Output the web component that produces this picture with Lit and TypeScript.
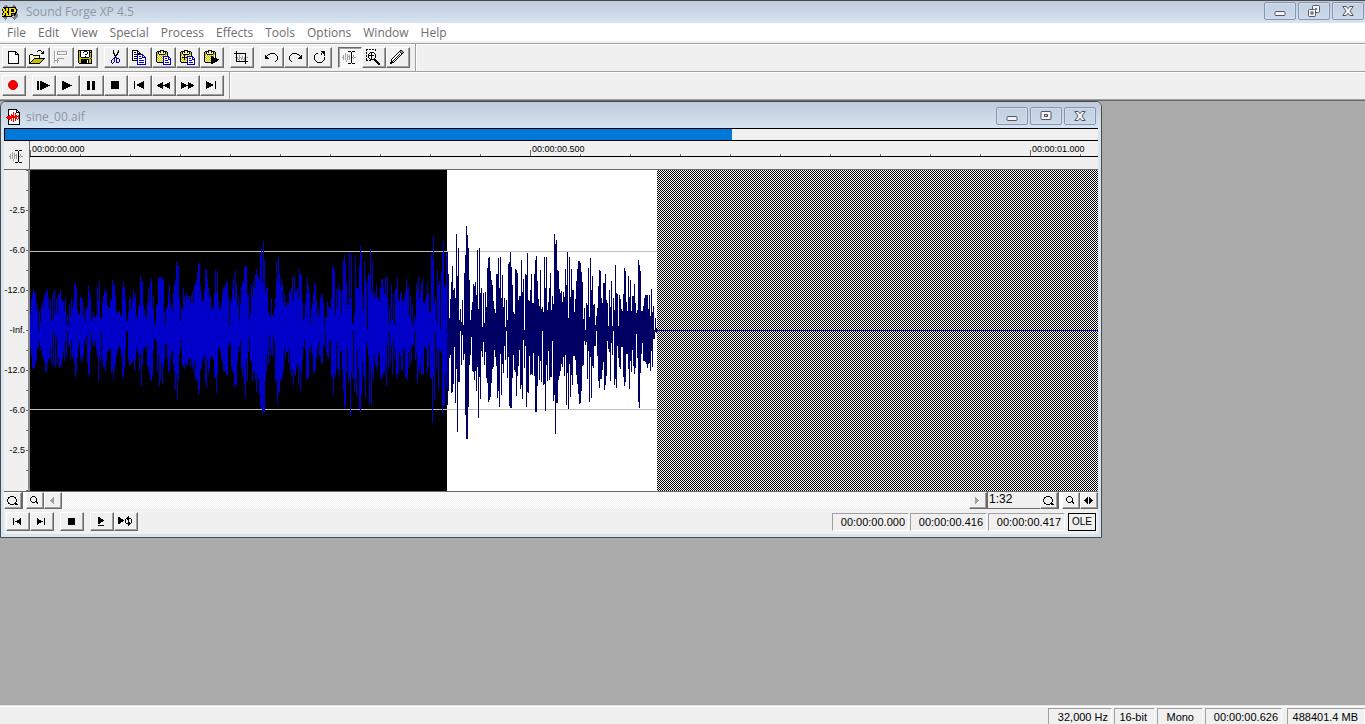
import { LitElement, html, css, svg } from "lit";
import { customElement, property } from "lit/decorators.js";

/* ---- waveform peaks: "above,below" the zero line, one pair per column ---- */
const PEAKS = `
17,16 32,25 35,38 41,37 37,37 37,31 20,30 27,17 0,17 18,10 8,20 25,15 23,27 30,24 33,30 37,41 41,41 39,33 32,28 21,28
31,16 9,32 36,0 10,35 40,4 17,36 32,7 17,33 36,27 36,37 40,36 31,35 28,28 30,21 18,30 32,10 5,26 15,0 4,15 25,14
14,28 31,9 22,28 30,23 46,32 46,46 42,41 20,27 14,18 17,11 33,26 33,32 31,28 14,24 21,9 9,14 20,5 24,31 45,43 38,45
33,21 9,1 13,11 18,15 13,14 13,9 15,19 43,26 29,50 48,26 12,31 11,2 27,29 34,36 41,36 37,41 39,30 25,21 22,19 22,19
31,18 29,42 50,38 45,48 46,39 34,34 18,25 17,20 19,18 18,15 15,18 14,26 42,44 48,48 43,36 30,19 11,1 9,0 18,28 30,34
33,34 20,32 29,32 40,28 33,40 37,29 16,20 11,17 24,23 25,39 54,23 49,55 49,34 25,19 21,14 13,19 12,15 27,35 43,35 29,43
48,50 52,49 21,44 34,19 9,8 4,8 26,11 25,40 53,23 52,55 52,50 53,31 51,53 51,36 19,28 5,13 23,13 23,28 35,41 46,40
22,28 28,21 19,20 38,34 45,41 50,59 69,44 64,68 64,50 32,23 9,19 23,9 20,34 42,36 34,38 27,32 37,34 35,34 30,28 34,28
27,36 34,28 39,35 27,40 46,29 45,48 50,49 58,50 66,64 67,59 43,39 34,36 29,30 29,28 40,25 61,52 61,57 51,28 42,43 33,38
35,28 19,25 24,25 22,29 36,47 60,47 37,62 59,43 29,18 21,16 21,20 27,28 35,30 43,40 45,41 42,39 49,44 47,44 33,15 4,12
30,14 28,36 41,40 52,43 32,56 60,54 46,54 25,30 33,21 12,16 26,10 43,39 49,47 48,36 64,53 64,67 64,28 36,50 35,21 11,6
17,29 46,31 34,50 49,40 42,40 56,49 61,61 56,44 53,48 50,63 75,75 81,78 48,83 89,81 70,81 38,50 42,40 43,23 18,33 15,5
13,25 32,18 16,25 13,4 21,12 32,51 69,49 49,73 73,63 56,61 44,50 52,48 46,46 28,39 36,18 24,28 24,21 28,21 26,32 39,19
37,39 42,45 53,39 29,54 54,42 39,45 39,36 42,33 31,52 61,36 55,60 56,41 28,29 10,16 13,9 28,19 37,48 53,48 45,47 37,17
6,22 21,14 26,24 36,41 47,43 45,39 30,28 15,18 23,11 13,25 32,25 36,33 35,32 27,14 3,17 14,0 12,21 29,26 23,28 23,10
22,10 32,45 64,47 62,64 59,42 15,46 41,12 23,38 46,38 40,46 40,20 17,20 40,38 70,60 75,77 66,75 46,42 25,18 25,52 78,47
32,85 76,41 8,48 5,0 17,61 75,48 42,65 42,19 42,38 64,78 84,81 75,64 35,30 20,46 69,46 51,67 48,12 1,18 57,25 54,73
81,36 38,75 68,42 34,50 39,24 32,34 44,35 32,39 33,21 29,26 42,45 51,49 51,46 42,42 35,43 52,35 33,55 54,14 5,38 24,0
9,33 46,15 10,44 36,7 5,28 40,18 41,48 52,43 30,43 29,21 35,25 39,39 30,39 27,18 32,19 39,46 51,46 41,49 43,21 14,36
34,17 9,32 25,13 2,15 14,0 9,29 47,23 39,52 54,38 32,42 38,32 46,43 51,43 28,44 25,16 30,18 35,18 48,43 36,36 18,13
18,47 77,48 71,92 94,45 25,69 32,0 7,39 60,18 45,59 49,19 1,20 58,22 78,83 89,74 44,74 43,42 77,56 78,74 56,60 12,27
31,24 48,62 64,61 40,53 42,16 32,72 96,38 54,101 82,51 10,51 21,0 8,34 30,4 5,29 57,23 75,84 104,108 95,108 82,76 50,34
10,24 20,6 28,40 46,41 44,49 48,40 35,60 80,36 21,87 82,46 37,68 42,20 3,26 37,11 7,34 38,21 23,47 62,52 72,71 73,69
59,66 50,52 45,38 29,36 21,19 17,26 56,35 56,67 72,60 42,76 73,23 32,64 55,33 23,42 32,15 3,29 30,0 10,47 66,26 68,75
78,77 63,77 45,47 18,24 16,39 61,41 60,65 57,45 30,35 34,19 34,58 70,54 38,68 51,9 0,37 56,15 55,76 77,61 30,62 29,25
40,44 56,43 27,44 27,22 56,45 70,81 74,81 49,55 31,25 24,49 60,30 21,51 23,0 18,54 73,53 42,80 73,34 20,50 28,20 42,49
57,46 20,46 34,10 26,70 96,64 86,103 90,72 60,72 59,49 41,45 37,40 39,33 28,36 38,26 33,45 61,24 45,74 78,42 12,78 73,33
33,66 61,44 40,54 40,25 18,25 31,29 49,44 61,53 69,63 69,73 67,72 58,60 48,35 11,34 22,10 0,14 27,11 25,48 62,20 13,71
72,26 40,67 54,35 25,37 26,15 5,15 14,0 22,25 44,50 60,57 59,48 32,48 27,39 47,31 47,59 56,54 30,45 27,10 4,18 40,21
23,50 49,12 4,24 32,0 20,54 65,48 37,57 36,15 4,27 35,36 31,38 21,16 19,16 36,46 62,55 59,51 28,23 19,23 54,38 33,58
50,30 19,41 34,19 34,35 46,43 27,37 17,3 20,27 70,71 65,77 59,42 19,23 19,12 24,30 32,30 35,31 35,33 35,37 21,33 35,32
14,40 41,20 18,36 24,8 0,8 12,1 2,2`
  .trim()
  .split(/\s+/)
  .map((pair) => pair.split(",").map(Number));

const SELECTED = 417;
const ZERO = 160;

const bars = (from: number, to: number) =>
  PEAKS.slice(from, to)
    .map(([up, down], i) => `M${i} ${ZERO - up}h1v${up + down + 1}h-1z`)
    .join("");

/* ---- pixel icons: one character per pixel ---- */
const INK: Record<string, string> = {
  k: "#000000", w: "#ffffff", y: "#ffff9c", o: "#c6bd00", b: "#0000c0",
  g: "#a0a0a0", r: "#ff0000", l: "#c8c8c8", d: "#808080", v: "#f0e010",
};

const ICONS: Record<string, string[]> = {
  app: [
    "...dd......dd...", "..dddd....dddd..", ".kkkkkkkkkkkkk..", "vvkkvvkvvvvvvkd.", "kvvkvvkvvkkkvvkd", "kvvkvvkvvkkkvvkd", ".kvvvkkvvkkkvvk.", ".kvvvkkvvvvvvkk.",
    "kvvkvvkvvkkkkkd.", "kvvkvvkvvkddkkdd", "vvkkvvvvvkkdkddd", "kkkkkkkkkk..dddd", ".dddd.....ddddd.", "..ddd......ddd..", "...d........d...",
  ],
  doc: [
    "..kkkkkkkkk...", "..kwwwwwwwkk..", "..kwwwwwwwkwk.", "..kwwwwrwwkkkk", "..kwwwwrwrwwwk", "..kwwrwrwrwwwk", "..krwrrrwrrwrk",
    ".rrrrrrrrrrrrk", "rrrrrrrrrrrwrk", ".rrrrrwrwrrwrk", "..krwrwrwrwrwk", "..kwwrwrwrwwwk", "..kwwwwrwwwwwk", "..kwwwwwwwwwwk",
    "..kwwwwwwwwwwk", "..kkkkkkkkkkkk",
  ],
  create: [
    "kkkkkkkk...", "kwwwwwwkk..", "kwwwwwwkwk.", "kwwwwwwkkkk", "kwwwwwwwwwk", "kwwwwwwwwwk", "kwwwwwwwwwk", "kwwwwwwwwwk",
    "kwwwwwwwwwk", "kwwwwwwwwwk", "kwwwwwwwwwk", "kwwwwwwwwwk", "kkkkkkkkkkk",
  ],
  open: [
    ".........kkk....", "........k...k.k.", ".............kk.", "............kkk.", ".kkk............", "kywykkkkkkk.....", "kwywywywywk.....",
    "kywywywywyk.....", "kwywykkkkkkkkkkk", "kywykoooooooook.", "kwykoooooooook..", "kykoooooooook...", "kkoooooooook....", "kkkkkkkkkkk.....",
  ],
  flags: [
    "g..gggggggggg.", "gw.gw.......gw", "gw.gw.......gw", "gw.ggggggggggw", "gw..wwwwwwwwww", "gw............", "gw............",
    "gw.ggggggg....", "gw.gw.........", "gggggw........", "gw.gw.........", "gw.gw.........", ".w..w.........",
  ],
  save: [
    "kkkkkkkkkkkkkk", "kokwwwkkkwwkok", "kokwwkwwwkwkkk", "kokwwwwwwkwkok", "kokwwwwkkwwkok", "kokwwwwwwwwkok", "kokwwwwkwwwkok",
    "kookkkkkkkkook", "koooooooooooko", "kookkkkkkkkook", "kookkkkkkwkook", "kookkkkkkwkook", "kookkkkkkwkook", ".kkkkkkkkkkkkk",
  ],
  cut: [
    "..k....k.", "..k....k.", "..k...kk.", "..kk..k..", "...k.kk..", "...kkk...", "....k....", "...kbb...",
    "..bb.bbb.", ".b.b.b..b", "b..b.b..b", "b..b.b..b", "b.b..bbb.", ".b.......",
  ],
  copy: [
    "kkkkkk........", "kwwwwkk.......", "kwkkwkwk......", "kwwwwkkkk.....", "kwkkkbbbbbb...", "kwwwwbwwwwbb..", "kwkkkbwbbwbwb.", "kwwwwbwwwwbbbb",
    "kwkkkbwbbbwwwb", "kwwwwbwwwwwwwb", "kkkkkbwbbbbbwb", ".....bwwwwwwwb", ".....bwbbbbbwb", ".....bwwwwwwwb", ".....bbbbbbbbb",
  ],
  paste: [
    "....kkkk.......", ".kkkkyykkkk....", "kokykyykykok...", "kokyyyyyykok...", "kookkkkkkook...", "koyoyoyoyoyk...", "kyoyoyobbbbbb..", "koyoyoybwwwwbb.",
    "kyoyoyobwbbwbwb", "koyoyoybwwwwbbb", "kyoyoyobwbbbwwb", "koyoyoybwwwwwwb", ".kkkkkkbwbbbbwb", ".......bwwwwwwb", ".......bbbbbbbb",
  ],
  pasteMix: [
    "....kkkk.......", ".kkkkyykkkk....", "kokykyykykok...", "kokyyyyyykok...", "kookkkkkkook...", "koyokoyoyoyk...", "kyoykyobbbbbb..", "kokkkkkbwwwwbb.",
    "kyoykyobwbbwbwb", "koyokoybwwwwbbb", "kyoyoyobwbbbwwb", "koyoyoybwwwwwwb", ".kkkkkkbwbbbbwb", ".......bwwwwwwb", ".......bbbbbbbb",
  ],
  pastePlay: [
    "....kkkk.......", ".kkkkyykkkk....", "kokykyykykok...", "kokyyyyyykok...", "kookkkkkkook...", "koyoyoyoyoyk...", "kyoyoyokkoyk...", "koyoyoykkkyk...",
    "kyoyoyokkkkkk..", "koyoyoykkkkkkkk", "kyoyoyokkkkkkk.", "koyoyoykkkkkk..", ".kkkkkkkkkk....", ".......kk......",
  ],
  crop: [
    "..k...........", "..k...........", "kkkkkkkkkkkk..", "..k........k..", "..k..g.....k..", "..k..g..g..k..", ".gkg.gg.g.gkgg", "..kg.g.gg.gk..",
    "..k.gg.g.ggk..", "..k..g....gk..", "..kkkkkkkkkkkk", "...........k..", "...........k..",
  ],
  undo: [
    ".....kkkkk...", "...kk.....k..", "k.k........k.", "kk..........k", "kkk.........k", "kkkk........k", "............k", "...........k.", "..........k..",
  ],
  redo: [
    "...kkkkk.....", "..k.....kk...", ".k........k.k", "k..........kk", "k.........kkk", "k........kkkk", "k............", ".k...........", "..k..........",
  ],
  repeat: [
    ".......kkkk", "........kkk", "..kk...k.kk", ".k.....k..k", "k.........k", "k..........", "k.........k", "k.........k", "k.........k",
    ".k.......k.", "..k.....k..", "...kkkkk...",
  ],
  edit: [
    "......kkk.kkk.", ".........k....", "...g.....k....", "...g.g...k....", ".g.g.g.g.k.g..", ".g.g.ggg.k.g..", "gg.g.g.g.kg.gg", ".g.g.g.g.k.g..",
    ".g.g.g.g.k....", "....g....k....", "....g....k....", ".........k....", "......kkk.kkk.",
  ],
  magnify: [
    "kk.kk.kk.k.....", "k........k.....", "...............", "k...kkkk.......", "k..k.k..k......", "..k..k...k.....", "k.kkkkkk.k.....", "k.k..k...k.....",
    "..k..k...k.....", "k..k.k..k......", "k...kkkkkk.....", "kk.kk...kkk....", ".........kkk...", "..........kkk..", "...........kkk.", "............kk.",
  ],
  pencil: [
    "..........kk..", ".........kggk.", "........kwkggk", ".......kwwwkk.", "......kwwkwk..", ".....kwwkwk...", "....kwwkwk....", "...kwwkwk.....",
    "..kwwkwk......", ".kwwkwk.......", ".kwkwk........", ".kkwk.........", "kkkk..........", "kk............",
  ],
  playAll: [
    "kk.kk........", "kk.kkkk......", "kk.kkkkkk....", "kk.kkkkkkkk..", "kk.kkkkkkkkkk", "kk.kkkkkkkk..", "kk.kkkkkk....", "kk.kkkk......", "kk.kk........",
  ],
  play: ["kk........", "kkkk......", "kkkkkk....", "kkkkkkkk..", "kkkkkkkkkk", "kkkkkkkk..", "kkkkkk....", "kkkk......", "kk........"],
  pause: Array(9).fill("kkk..kkk"),
  stop: Array(8).fill("kkkkkkkk"),
  start: ["k........k", "k......kkk", "k....kkkkk", "k..kkkkkkk", "k..kkkkkkk", "k....kkkkk", "k......kkk", "k........k"],
  end: ["k........k", "kkk......k", "kkkkk....k", "kkkkkkk..k", "kkkkkkk..k", "kkkkk....k", "kkk......k", "k........k"],
  startSmall: ["k......k", "k.....kk", "k...kkkk", "k.kkkkkk", "k...kkkk", "k.....kk", "k......k"],
  endSmall: ["k......k", "kk.....k", "kkkk...k", "kkkkkk.k", "kkkk...k", "kk.....k", "k......k"],
  stopSmall: Array(7).fill("kkkkkkk"),
  rewind: [".....k......k", "...kkk....kkk", ".kkkkk..kkkkk", "kkkkkkkkkkkkk", ".kkkkk..kkkkk", "...kkk....kkk", ".....k......k"],
  forward: ["k......k.....", "kkk....kkk...", "kkkkk..kkkkk.", "kkkkkkkkkkkkk", "kkkkk..kkkkk.", "kkk....kkk...", "k......k....."],
  playLine: ["kk....", "kkk...", "kkkkk.", "kkkkkk", "kkkkk.", "kkk...", "kk....", "......", "kkkkkk"],
  playLoop: [
    "..........k....", "kk.......kk....", "kkk.....kkkkk..", "kkkkk..k.kk..k.", "kkkkkk.k..k..k.", "kkkkk..k..k..k.", "kkk....k..kk.k.", "kk......kkkkk..", "..........kk...", "..........k....",
  ],
  zoomBig: [
    "...kkkk....", ".kk....kk..", ".k......k..", "k........k.", "k........k.", "k........k.", ".k......k..", ".kk....kkk.", "...kkkk.kkk",
  ],
  zoomSmall: ["..kkk...", ".k...k..", "k.....k.", "k.....k.", "k.....k.", ".k...kk.", "..kkk.kk", ".......k"],
  left: ["...g", "..gg", ".ggg", "gggg", ".ggg", "..gg", "...g"],
  right: ["g...", "gg..", "ggg.", "gggg", "ggg.", "gg..", "g..."],
  spread: ["...k.k...", "..kk.kk..", ".kkk.kkk.", "kkkk.kkkk", ".kkk.kkk.", "..kk.kk..", "...k.k..."],
};

function pixels(name: string) {
  const rows = ICONS[name];
  const paths: Record<string, string> = {};
  rows.forEach((row, y) =>
    [...row].forEach((c, x) => {
      if (c !== ".") paths[c] = (paths[c] ?? "") + `M${x} ${y}h1v1h-1z`;
    })
  );
  const w = Math.max(...rows.map((r) => r.length));
  return html`<svg width=${w} height=${rows.length} viewBox="0 0 ${w} ${rows.length}" shape-rendering="crispEdges" aria-hidden="true">
    ${Object.entries(paths).map(([c, d]) => svg`<path d=${d} fill=${INK[c]}></path>`)}
  </svg>`;
}

@customElement("tool-button")
class ToolButton extends LitElement {
  @property() icon = "";
  @property() label = "";
  @property({ type: Boolean }) pressed = false;
  static styles = css`
    :host { display: block; width: 24px; height: 21px; }
    button {
      display: flex; align-items: center; justify-content: center;
      box-sizing: border-box; width: 100%; height: 100%; padding: 0 2px 1px 0;
      background: #f0f0f0; border: 1px solid; border-color: #fff #696969 #696969 #fff;
      box-shadow: inset -1px -1px #a0a0a0;
    }
    .pressed { background: #f8f8f8; border-color: #696969 #fff #fff #696969; box-shadow: inset 1px 1px #a0a0a0; }
    .rec { width: 10px; height: 10px; border-radius: 50%; background: #f00; border: 1px solid #c00; box-sizing: border-box; }
    svg { display: block; flex: none; }
  `;
  render() {
    return html`<button class=${this.pressed ? "pressed" : ""} aria-label=${this.label}>
      ${this.icon === "record" ? html`<span class="rec"></span>` : pixels(this.icon)}
    </button>`;
  }
}

@customElement("window-buttons")
class WindowButtons extends LitElement {
  @property() middle = "restore";
  static styles = css`
    :host { display: flex; gap: 2px; }
    button {
      display: flex; align-items: center; justify-content: center;
      width: 32px; height: 18px; padding: 0; box-sizing: border-box;
      border: 1px solid #8793b2; border-radius: 2px;
      background: linear-gradient(#c3d0df, #cbd9e8); box-shadow: inset 0 0 0 1px #d2dded;
    }
    svg { display: block; }
  `;
  render() {
    return html`
      <button aria-label="Minimize">
        <svg width="12" height="12" viewBox="0 0 12 12"><rect x="1" y="6.5" width="10" height="4" rx="1" fill="#f4f4f4" stroke="#535666"></rect></svg>
      </button>
      <button aria-label=${this.middle}>
        ${this.middle === "restore"
          ? html`<svg width="12" height="12" viewBox="0 0 12 12" fill="#f4f4f4" stroke="#535666">
              <rect x="4.5" y=".5" width="7" height="7" rx="1"></rect><path d="M7.5 3.5h1v1h-1z" fill="#c5d2e1"></path>
              <rect x=".5" y="4.5" width="7" height="7" rx="1"></rect><rect x="3" y="7" width="2" height="2" fill="#c5d2e1"></rect>
            </svg>`
          : html`<svg width="12" height="12" viewBox="0 0 12 12" fill="#f4f4f4" stroke="#535666">
              <rect x="1" y="1.5" width="10" height="8" rx="1"></rect><rect x="4.5" y="4.5" width="3" height="2" fill="#c5d2e1"></rect>
            </svg>`}
      </button>
      <button aria-label="Close">
        <svg width="12" height="12" viewBox="0 0 12 12">
          <path d="M.8 1.5h3.400L6 3.700 7.800 1.500h3.400L8 6l3.200 4.500H7.800L6 8.300 4.200 10.500H.8L4 6z" fill="#f4f4f4" stroke="#535666" stroke-linejoin="round"></path>
        </svg>
      </button>`;
  }
}

type Tool = [icon: string, label: string, pressed?: boolean];

const STANDARD: Tool[][] = [
  [["create", "New"], ["open", "Open"], ["flags", "Close file"], ["save", "Save as"]],
  [["cut", "Cut"], ["copy", "Copy"], ["paste", "Paste"], ["pasteMix", "Mix"], ["pastePlay", "Play clipboard"]],
  [["crop", "Trim"]],
  [["undo", "Undo"], ["redo", "Redo"], ["repeat", "Repeat"]],
  [["edit", "Edit tool", true], ["magnify", "Magnify tool"], ["pencil", "Pencil tool"]],
];
const TRANSPORT: Tool[][] = [
  [["record", "Record"]],
  [
    ["playAll", "Play all"], ["play", "Play"], ["pause", "Pause"], ["stop", "Stop"],
    ["start", "Go to start"], ["rewind", "Rewind"], ["forward", "Forward"], ["end", "Go to end"],
  ],
];
const DATA_TRANSPORT: Tool[][] = [
  [["startSmall", "Go to start"], ["endSmall", "Go to end"]],
  [["stopSmall", "Stop"]],
  [["playLine", "Play normal"], ["playLoop", "Play looped"]],
];
const MENUS = ["File", "Edit", "View", "Special", "Process", "Effects", "Tools", "Options", "Window", "Help"];
const LEVELS = ["-2.5", "-6.0", "-12.0", "-Inf.", "-12.0", "-6.0", "-2.5"];
const TIMES = ["00:00:00.000", "00:00:00.500", "00:00:01.000"];

@customElement("app-root")
class AppRoot extends LitElement {
  static styles = css`
    :host {
      display: flex; flex-direction: column; min-height: 100vh; box-sizing: border-box;
      background: #f0f0f0; color: #000; font: 11px/14px "Liberation Sans", Arial, sans-serif;
    }
    svg { display: block; }
    .title {
      display: flex; align-items: center; justify-content: space-between;
      color: #8f969f; font: 12px/16px "Open Sans", "Noto Sans", sans-serif;
      background: linear-gradient(#bfcbda, #d7e4f2);
    }
    .title h1, .title h2 { display: flex; align-items: center; margin: 0; font: inherit; }
    .main-title { height: 23px; box-sizing: border-box; border-top: 1px solid #4a4a4a; padding: 0 1px 2px 2px; }
    .main-title h1 { gap: 8px; padding-top: 2px; }
    nav {
      display: flex; gap: 12px; height: 18px; padding: 0 7px; background: #fff;
      font: 12px/20px "Open Sans", "Noto Sans", sans-serif;
    }
    nav a { color: #6d6d6d; text-decoration: none; }
    .bars { border-top: 1px solid #a0a0a0; box-shadow: inset 0 1px #fff; margin-top: 2px; }
    .bar { display: flex; gap: 6px; width: max-content; box-sizing: border-box; padding: 3px 5px 3px 2px; border-right: 1px solid #a0a0a0; box-shadow: 1px 0 #fff; }
    .standard { height: 27px; }
    .lower { border-top: 1px solid #a0a0a0; box-shadow: inset 0 1px #fff; }
    .transport { height: 27px; }
    .group { display: flex; }
    .desk { flex: 1; background: #ababab; border-top: 1px solid #a0a0a0; box-shadow: inset 0 1px #696969; padding-top: 1px; }
    .win {
      width: calc(100% - 263px); box-sizing: border-box; background: #d7e4f2;
      border: 1px solid #4a4a4a; border-radius: 6px 6px 0 0; padding: 0 3px 3px; overflow: hidden;
    }
    .win-title { height: 26px; margin: 0 -3px; padding: 0 5px; }
    .win-title h2 { gap: 6px; padding-top: 3px; }
    .win-title window-buttons { padding-top: 2px; }
    .body { background: #f0f0f0; }
    .overview { height: 13px; box-sizing: border-box; border: 1px solid #000; border-right: 0; }
    .overview div { height: 100%; background: #0078d7; }
    .ruler { display: flex; height: 29px; box-sizing: border-box; border-bottom: 1px solid #696969; }
    .corner { width: 25px; display: flex; align-items: center; justify-content: center; box-sizing: border-box; padding: 2px 2px 0 0; }
    .times {
      flex: 1; display: flex; overflow: hidden; border-left: 1px solid #696969; height: 28px;
      font-size: 9px; line-height: 10px;
      background:
        linear-gradient(#000, #000) 0 15px / 100% 1px no-repeat,
        repeating-linear-gradient(90deg, #696969 0 1px, #fff 1px 2px, transparent 2px 50px) 0 13px / 100% 2px no-repeat;
    }
    .times span { flex: 0 0 500px; box-sizing: border-box; height: 15px; padding: 3px 0 0 2px; background: linear-gradient(#696969, #696969) 0 100% / 1px 6px no-repeat; }
    .wave { display: flex; height: 321px; }
    .levels {
      width: 26px; box-sizing: border-box; border-right: 2px solid #8a8a8a; padding: 20px 3px 0 0;
      font-size: 9px; line-height: 41px; display: flex; flex-direction: column; align-items: flex-end;
      background: repeating-linear-gradient(#696969 0 1px, #fff 1px 2px, transparent 2px 20px) 100% 0 / 2px 100% no-repeat;
    }
    .levels span { height: 40px; white-space: nowrap; }
    .sel { background: #000; }
    .unsel { background: #fff; }
    .void {
      flex: 1; display: flex; align-items: center;
      background: repeating-conic-gradient(#000 0 25%, #fff 0 50%) 0 0 / 2px 2px;
    }
    .void i { flex: 1; height: 1px; background: #0000e0; }
    .scroll { display: flex; height: 18px; box-sizing: border-box; border-top: 1px solid #696969; }
    .scroll tool-button { width: 18px; height: 17px; }
    .slot { width: 4px; box-sizing: border-box; border-left: 1px solid #696969; background: #fff; }
    .track { flex: 1; background: repeating-conic-gradient(#f0f0f0 0 25%, #fff 0 50%) 0 0 / 2px 2px; }
    .ratio { width: 53px; box-sizing: border-box; border-left: 1px solid #696969; border-bottom: 1px solid #696969; padding: 0 1px; font-size: 12px; }
    .foot { display: flex; justify-content: space-between; padding: 3px 2px 2px; height: 25px; box-sizing: border-box; }
    .foot tool-button { height: 19px; }
    .foot .buttons { display: flex; gap: 6px; }
    .readouts { display: flex; gap: 1px; padding-top: 1px; }
    .cell { box-sizing: border-box; height: 18px; border: 1px solid; border-color: #a0a0a0 #fff #fff #a0a0a0; padding: 1px 3px; text-align: right; white-space: nowrap; }
    .readouts .cell { width: 77px; }
    .ole { width: 28px; height: 18px; margin-left: 2px; box-sizing: border-box; border: 1px solid #000; background: #f0f0f0; padding: 0; font: 10px/12px "Liberation Sans", Arial, sans-serif; }
    .status { display: flex; justify-content: flex-end; gap: 2px; height: 19px; box-sizing: border-box; border-top: 1px solid #e3e3e3; box-shadow: inset 0 1px #fff; padding-top: 2px; }
    .status .cell { height: 16px; border-bottom: 0; line-height: 14px; }
    .rate { width: 64px; }
    .bits { width: 41px; padding-right: 7px; }
    .chan { width: 46px; padding-right: 8px; }
    .len { width: 77px; }
    .disk { width: 78px; margin-left: 3px; padding-right: 6px; }
  `;

  private groups(list: Tool[][]) {
    return list.map(
      (g) => html`<div class="group">
        ${g.map(([icon, label, pressed]) => html`<tool-button icon=${icon} label=${label} ?pressed=${!!pressed}></tool-button>`)}
      </div>`
    );
  }

  private strip(from: number, to: number, fill: string) {
    const w = to - from;
    return html`<svg width=${w} height="321" viewBox="0 0 ${w} 321" shape-rendering="crispEdges" aria-hidden="true">
      <path d="M0 81h${w}v1H0zM0 239h${w}v1H0z" fill="#c0c0c0"></path>
      <path d=${bars(from, to)} fill=${fill}></path>
      <path d="M0 160h${w}v1H0z" fill=${fill}></path>
    </svg>`;
  }

  render() {
    return html`
      <header class="title main-title">
        <h1>${pixels("app")}<span>Sound Forge XP 4.5</span></h1>
        <window-buttons middle="restore"></window-buttons>
      </header>
      <nav>${MENUS.map((m) => html`<a href="#">${m}</a>`)}</nav>
      <div class="bars">
        <div class="bar standard">${this.groups(STANDARD)}</div>
        <div class="lower"><div class="bar transport">${this.groups(TRANSPORT)}</div></div>
      </div>
      <main class="desk">
        <section class="win">
          <div class="title win-title">
            <h2>${pixels("doc")}<span>sine_00.aif</span></h2>
            <window-buttons middle="maximize"></window-buttons>
          </div>
          <div class="body">
            <div class="overview"><div style="width:66.5%"></div></div>
            <div class="ruler">
              <div class="corner">${pixels("edit")}</div>
              <div class="times">${TIMES.map((t) => html`<span>${t}</span>`)}</div>
            </div>
            <div class="wave">
              <div class="levels">${LEVELS.map((l) => html`<span>${l}</span>`)}</div>
              <div class="sel">${this.strip(0, SELECTED, "#0000c8")}</div>
              <div class="unsel">${this.strip(SELECTED, PEAKS.length, "#000064")}</div>
              <div class="void"><i></i></div>
            </div>
            <div class="scroll">
              <tool-button icon="zoomBig" label="Zoom level in"></tool-button>
              <div class="slot"></div>
              <tool-button icon="zoomSmall" label="Zoom level out"></tool-button>
              <tool-button icon="left" label="Scroll left"></tool-button>
              <div class="track"></div>
              <tool-button icon="right" label="Scroll right"></tool-button>
              <div class="ratio">1:32</div>
              <tool-button icon="zoomBig" label="Zoom in"></tool-button>
              <div class="slot"></div>
              <tool-button icon="zoomSmall" label="Zoom out"></tool-button>
              <tool-button icon="spread" label="Zoom to selection"></tool-button>
            </div>
            <div class="foot">
              <div class="buttons">${this.groups(DATA_TRANSPORT)}</div>
              <div class="readouts">
                ${["00:00:00.000", "00:00:00.416", "00:00:00.417"].map((t) => html`<div class="cell">${t}</div>`)}
                <button class="ole">OLE</button>
              </div>
            </div>
          </div>
        </section>
      </main>
      <footer class="status">
        <div class="cell rate">32,000 Hz</div>
        <div class="cell bits">16-bit</div>
        <div class="cell chan">Mono</div>
        <div class="cell len">00:00:00.626</div>
        <div class="cell disk">488401.4 MB</div>
      </footer>
    `;
  }
}
